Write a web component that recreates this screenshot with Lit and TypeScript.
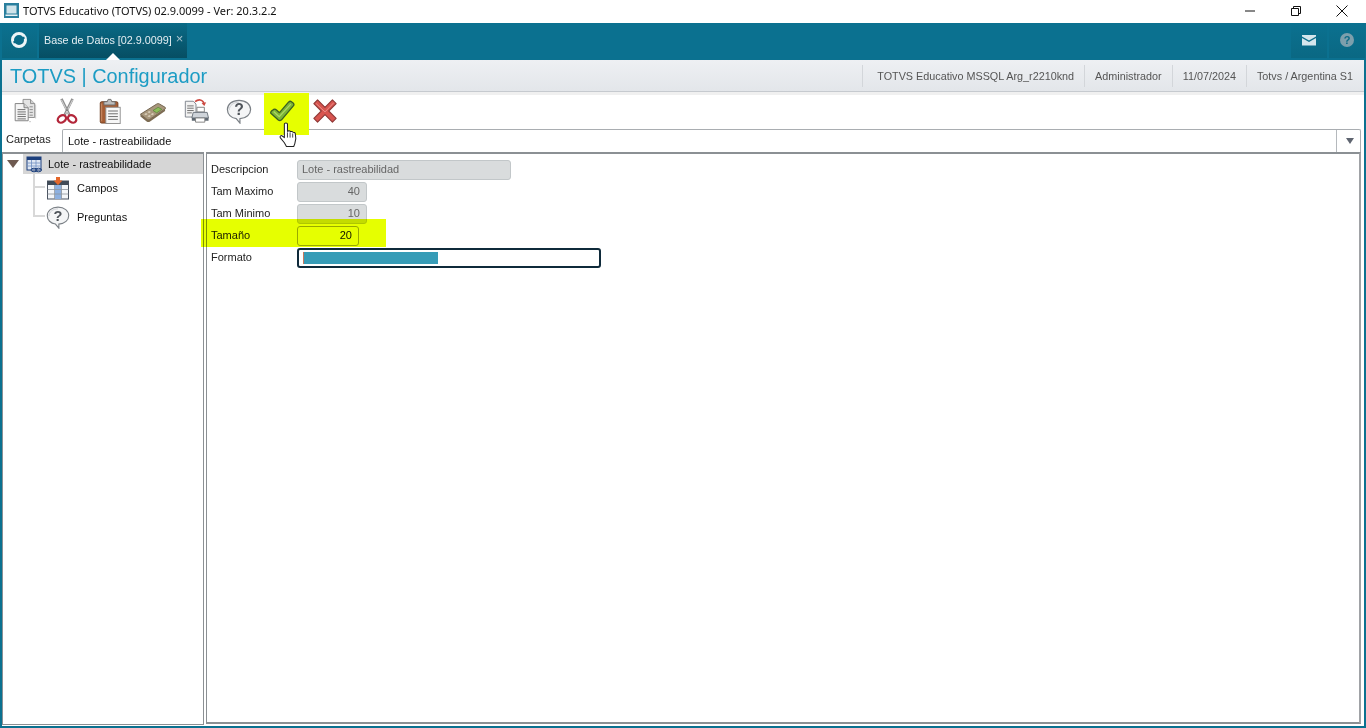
import { LitElement, html, css, svg } from "lit";
import { customElement } from "lit/decorators.js";

const copyIcon = svg`
  <path d="M13 1.500h8l4.500 4.500v15H13z" fill="#e4e4e4" stroke="#8d8d8d"/>
  <path d="M21 1.500V6h4.500" fill="#cfcfcf" stroke="#8d8d8d"/>
  <path d="M4.500 6H14l4.500 4.500v14h-14z" fill="#f5f5f5" stroke="#7d7d7d"/>
  <path d="M14 6v4.500h4.500" fill="#d6d6d6" stroke="#7d7d7d"/>
  <path d="M7 12.500h8.500M7 15h9M7 17.500h9M7 20h9M7 22.500h9" stroke="#666" stroke-width="1"/>
  <path d="M20 9.500h3.500M20 12.500h3.500M20 15.500h3.500M20 18.500h3.500" stroke="#888"/>
  <path d="M19.500 25.500h2M26.500 7v15" fill="none" stroke="#c4c4c4"/>`;

const scissorsIcon = svg`
  <path d="M8 1l8.500 17M20 1l-8.500 17" stroke="#8f8f8f" stroke-width="2.800" fill="none"/>
  <path d="M8 2l7.500 15M20 2l-7.500 15" stroke="#dcdcdc" stroke-width="1" fill="none"/>
  <circle cx="14" cy="13" r=".9" fill="#555"/>
  <ellipse cx="8.500" cy="22.500" rx="4.800" ry="3.600" transform="rotate(-35 8.500 22.500)" fill="none" stroke="#b3263a" stroke-width="2.500"/>
  <ellipse cx="19.500" cy="22.500" rx="4.800" ry="3.600" transform="rotate(35 19.500 22.500)" fill="none" stroke="#b3263a" stroke-width="2.500"/>`;

const clipboardIcon = svg`
  <rect x="3.500" y="4" width="19" height="23" rx="1.500" fill="#a65d34" stroke="#6f3f22"/>
  <path d="M5 6v19" stroke="#c88860" stroke-width="1.200"/>
  <rect x="9.500" y="10" width="15.500" height="17.500" fill="#f7f7f7" stroke="#8f8f8f"/>
  <path d="M12 14h10.500M12 17h10.500M12 20h10.500M12 23h10.500" stroke="#666"/>
  <path d="M7.500 7.500V4h3.500l1-2.500h3L16 4h3.500v3.500z" fill="#bdbdbd" stroke="#6c6c6c"/>`;

const calculatorIcon = svg`
  <path d="M.500 17.500L18 6.500c1-.6 2-.6 3 0l6 3.500c.8.600.8 1.200 0 1.800L10.500 23c-1 .6-2 .6-3 0z" fill="#a8977c" stroke="#6d5e49"/>
  <path d="M.500 17.500l7 5.500c1 .6 2 .6 3 0l16.500-11.200v2.200L10.500 25.500c-1 .6-2 .6-3 0L.500 20z" fill="#7c6b52"/>
  <path d="M14 13.500l5.500-3.500 4 2.200-5.500 3.800z" fill="#8cbf5a" stroke="#557f35" stroke-width=".7"/>
  <path d="M4.500 17.500l2-1.300 1.800 1.100-2 1.300zM8 19.700l2-1.300 1.800 1.100-2 1.300zM8 15.200l2-1.300 1.800 1.100-2 1.300zM11.500 17.500l2-1.300 1.800 1.100-2 1.300z" fill="#d8ceb9"/>`;

const printIcon = svg`
  <path d="M2.500 3.500h8.500l3 3v14H2.500z" fill="#f2f2f2" stroke="#7c828a"/>
  <path d="M4.500 8.500h7M4.500 11h7M4.500 13.500h7M4.500 16h5" stroke="#6a6a6a"/>
  <path d="M13 4c3.500-3 8-2.500 9.500 1.500" fill="none" stroke="#cc4a42" stroke-width="1.800"/>
  <path d="M25 4.500l-2 4-3-2.800z" fill="#cc4a42"/>
  <path d="M15 10h8v5h-8z" fill="#fff" stroke="#808080"/>
  <path d="M11 15.500h15l1.500 6h-18z" fill="#cfd4da" stroke="#69717a"/>
  <path d="M9.500 21.500h18v3h-18z" fill="#5f6872"/>
  <path d="M13.500 21.500h10v4.500h-10z" fill="#fff" stroke="#808080"/>`;

const helpBubble = svg`
  <path d="M14 2.500C6.500 2.500 1.500 7 1.500 12.500c0 5 4 9 9.500 9.700l4 4.800v-4.700c7-.4 11.500-4.800 11.500-9.800C26.500 7 21.500 2.500 14 2.500z" fill="#f4f5f6" stroke="#7b8086" stroke-width="1.300"/>
  <path d="M3.500 13c0-5 4.500-8.500 10.500-8.500" fill="none" stroke="#c9ccd0" stroke-width="1"/>
  <text x="14" y="18.500" text-anchor="middle" font-family="Liberation Sans, sans-serif" font-weight="700" font-size="17" fill="#4f545a">?</text>`;

const checkIcon = svg`
  <path d="M2 16.500c-.5-1 .2-2 1-2.700l2-1.500c1-.6 2-.5 2.800.3l3.500 3.200L21 4.500c1-1 2.200-1.300 3.200-.5l1.800 1.500c1 .8 1 2 .2 3L13.500 23.500c-1 1-2.500 1-3.500.2z" fill="#7db536" stroke="#3a5f22" stroke-width="1.400" stroke-linejoin="round"/>
  <path d="M5 14.500l6 5.500L23.500 6.500" fill="none" stroke="#aed766" stroke-width="1.300"/>`;

const crossIcon = svg`
  <path d="M2 6l4-4 8 8 8-8 4 4-8 8 8 8-4 4-8-8-8 8-4-4 8-8z" fill="#d8544f" stroke="#8f3a38" stroke-width="1.200" stroke-linejoin="round"/>
  <path d="M4.500 6L14 15 23.500 5" fill="none" stroke="#ec928c" stroke-width="1"/>`;

const toolIcons = [copyIcon, scissorsIcon, clipboardIcon, calculatorIcon, printIcon, helpBubble, checkIcon, crossIcon];

@customElement("app-root")
export class AppRoot extends LitElement {
  static styles = css`
    :host {
      display: flex;
      flex-direction: column;
      height: 728px;
      overflow: hidden;
      position: relative;
      background: #fff;
      font-family: "Liberation Sans", Arial, sans-serif;
      font-size: 11px;
      color: #222;
    }
    .titlebar {
      height: 23px;
      flex: none;
      box-sizing: border-box;
      display: flex;
      align-items: center;
      padding: 0 1px 2px 4px;
      background: #fff;
      font-family: "Noto Sans", sans-serif;
      font-size: 11px;
      color: #111;
    }
    .titlebar .app-icon { width: 15px; height: 15px; margin-right: 4px; }
    .titlebar .title { flex: 1; }
    .win-btn { width: 46px; display: flex; justify-content: center; }
    .win-btn svg { width: 12px; height: 12px; }

    .tabs {
      height: 37px;
      flex: none;
      box-sizing: border-box;
      display: flex;
      background: #0b7190;
      padding: 0 1px 0 2px;
    }
    .logo-cell {
      width: 35px;
      height: 35px;
      box-sizing: border-box;
      padding: 0 1px 2px 0;
      display: flex;
      align-items: center;
      justify-content: center;
      background: linear-gradient(#0b7190, #0a667f);
      margin-right: 2px;
    }
    .logo-cell svg { width: 18px; height: 18px; }
    .tab {
      width: 148px;
      height: 35px;
      box-sizing: border-box;
      padding: 11px 0 0 5px;
      position: relative;
      background: linear-gradient(#0a6a86, #064e63);
      color: #e4eef2;
      font-size: 10.800px;
      white-space: nowrap;
      display: flex;
      gap: 4px;
    }
    .tab .close { color: #a8c4ce; font-size: 13px; line-height: 10px; }
    .tab .notch {
      position: absolute;
      left: 67px;
      bottom: -2px;
      width: 0;
      height: 0;
      border: 7px solid transparent;
      border-top: 0;
      border-bottom: 7px solid #fff;
    }
    .spacer { flex: 1; }
    .side-btn {
      width: 36px;
      height: 35px;
      box-sizing: border-box;
      padding-bottom: 2px;
      margin-left: 2px;
      display: flex;
      align-items: center;
      justify-content: center;
      background: linear-gradient(#0b7190, #0a6883);
    }
    .side-btn svg { width: 16px; height: 16px; }

    .frame {
      flex: 1;
      display: flex;
      flex-direction: column;
      min-height: 0;
      border-left: 2px solid #0b7190;
      border-right: 2px solid #0b7190;
      border-bottom: 2px solid #0b7190;
      background: #fff;
    }
    .head {
      height: 32px;
      flex: none;
      box-sizing: border-box;
      display: flex;
      align-items: center;
      background: linear-gradient(#eef0f3, #e3e6ea);
      border-bottom: 1px solid #c6cacf;
      padding: 0 1px 0 8px;
    }
    .brand {
      flex: 1;
      padding-top: 1px;
      font-size: 19.900px;
      color: #1c9cc4;
    }
    .info {
      height: 22px;
      display: flex;
      align-items: center;
      padding: 0 10px;
      border-left: 1px solid #d3d6da;
      color: #555;
      font-size: 10.800px;
      white-space: nowrap;
    }
    .info.first { padding-left: 14px; }
    .strip { height: 3px; flex: none; background: #f0f0f0; }

    .toolbar {
      height: 34px;
      flex: none;
      box-sizing: border-box;
      padding-bottom: 2px;
      display: flex;
    }
    .tool {
      width: 43px;
      flex: none;
      display: flex;
      align-items: center;
      justify-content: center;
      position: relative;
    }
    .tool svg { width: 26px; height: 26px; position: relative; }
    .tool.hit::before {
      content: "";
      position: absolute;
      left: 4px;
      top: -2px;
      width: 45px;
      height: 42px;
      background: #e6ff00;
    }
    .hand {
      position: absolute;
      left: 279px;
      top: 122px;
      width: 18px;
      height: 26px;
    }

    .selector {
      height: 23px;
      flex: none;
      display: flex;
      align-items: center;
    }
    .selector label { width: 60px; padding-left: 4px; box-sizing: border-box; margin-top: -3px; }
    .combo {
      flex: 1;
      align-self: stretch;
      display: flex;
      align-items: center;
      box-sizing: border-box;
      border: 1px solid #a9adb1;
      border-bottom: 0;
      border-radius: 2px 2px 0 0;
      padding-left: 5px;
      margin-right: 3px;
    }
    .combo .value { flex: 1; color: #111; }
    .combo .arrow {
      width: 24px;
      align-self: stretch;
      box-sizing: border-box;
      padding-left: 3px;
      display: flex;
      align-items: center;
      justify-content: center;
      border-left: 1px solid #b5b9bd;
    }
    .combo .arrow i {
      width: 0;
      height: 0;
      border: 4px solid transparent;
      border-top: 6px solid #5f6570;
      border-bottom: 0;
    }

    .panes {
      flex: 1;
      min-height: 0;
      display: flex;
      gap: 2px;
      padding: 0 3px 1px 0;
    }
    .tree {
      width: 202px;
      flex: none;
      box-sizing: border-box;
      border: 1px solid #8b9094;
      border-top-width: 2px;
    }
    .tree-root {
      height: 20px;
      display: flex;
      align-items: center;
    }
    .caret {
      width: 0;
      height: 0;
      margin: 0 4px 0 4px;
      border: 6px solid transparent;
      border-top: 8px solid #6e5a50;
      border-bottom: 0;
    }
    .root-sel {
      flex: 1;
      align-self: stretch;
      display: flex;
      align-items: center;
      gap: 5px;
      padding-left: 3px;
      background: #d6d6d6;
      color: #111;
    }
    .root-sel svg { width: 17px; height: 17px; }
    .child {
      display: flex;
      align-items: center;
      height: 29px;
      margin-left: 30px;
      color: #111;
    }
    .child:nth-child(2) { margin-top: -1px; }
    .child svg { width: 24px; height: 24px; margin-right: 7px; }
    .wire {
      width: 12px;
      height: 29px;
      box-sizing: border-box;
      border-left: 2px solid #d8d8d8;
      margin-right: 1px;
      position: relative;
    }
    .wire::after {
      content: "";
      position: absolute;
      left: 0;
      right: 0;
      top: 13px;
      border-top: 2px solid #d8d8d8;
    }
    .wire.last { height: 15px; align-self: flex-start; }

    .form {
      flex: 1;
      box-sizing: border-box;
      border: 1px solid #8b9094;
      border-top-width: 2px;
      border-bottom-width: 2px;
      border-right: 2px solid #a0a2a6;
      margin-bottom: 1px;
      padding: 6px 0 0 4px;
      display: flex;
      flex-direction: column;
      gap: 2px;
      position: relative;
    }
    .row {
      height: 20px;
      display: flex;
      align-items: center;
      color: #222;
    }
    .row .lbl { width: 86px; flex: none; padding-bottom: 2px; }
    .field {
      height: 20px;
      box-sizing: border-box;
      border: 1px solid #c2c7c9;
      border-radius: 3px;
      background: #d9dcdd;
      color: #666;
      padding: 0 4px 2px;
      display: flex;
      align-items: center;
    }
    .field.num { justify-content: flex-end; padding-right: 6px; }
    .w-desc { width: 214px; }
    .w-tam { width: 70px; }
    .w-cur { width: 62px; background: #fff; color: #111; border-color: #aaa; }
    .w-fmt {
      width: 304px;
      background: #fff;
      border: 2px solid #0f2a3a;
      padding: 2px 4px;
      align-items: stretch;
    }
    .w-fmt span { width: 135px; background: #379cb7; border-left: 1px solid #c8785e; box-sizing: border-box; }
    .mark {
      position: absolute;
      left: -6px;
      top: 65px;
      width: 185px;
      height: 28px;
      background: #e6ff00;
      mix-blend-mode: multiply;
    }
  `;

  render() {
    return html`
      <div class="titlebar">
        <svg class="app-icon" viewBox="0 0 15 15">
          <rect width="15" height="15" fill="#2a7f9e"/>
          <rect x="2.500" y="2.500" width="10" height="8" fill="#cfe3ea"/>
          <rect x="1.500" y="11.500" width="12" height="1.500" fill="#e8f1f4"/>
        </svg>
        <span class="title">TOTVS Educativo (TOTVS) 02.9.0099 - Ver: 20.3.2.2</span>
        <span class="win-btn"><svg viewBox="0 0 12 12"><path d="M1 6h10" stroke="#111" fill="none"/></svg></span>
        <span class="win-btn"><svg viewBox="0 0 12 12"><path d="M1.500 3.500h7v7h-7zM3.500 3.500v-2h7v7h-2" stroke="#111" fill="none"/></svg></span>
        <span class="win-btn"><svg viewBox="0 0 12 12"><path d="M.500 .500l11 11M11.500 .500l-11 11" stroke="#111" fill="none"/></svg></span>
      </div>

      <div class="tabs">
        <div class="logo-cell">
          <svg viewBox="0 0 18 18">
            <circle cx="9" cy="9" r="6.500" fill="none" stroke="#eef5f7" stroke-width="3"/>
            <path d="M3.500 11.500L14.500 6.500" stroke="#0b6a86" stroke-width="2"/>
          </svg>
        </div>
        <div class="tab">
          Base de Datos [02.9.0099]<span class="close">×</span>
          <span class="notch"></span>
        </div>
        <div class="spacer"></div>
        <div class="side-btn">
          <svg viewBox="0 0 16 16">
            <path d="M1 3h14v1.500L8 8.500 1 4.500z" fill="#d5e6ec"/>
            <path d="M1 6l7 4 7-4v7.500H1z" fill="#d5e6ec"/>
          </svg>
        </div>
        <div class="side-btn">
          <svg viewBox="0 0 16 16">
            <circle cx="8" cy="8" r="7" fill="#7d9fac"/>
            <text x="8" y="12" text-anchor="middle" font-family="Liberation Sans, sans-serif" font-weight="700" font-size="11" fill="#0b6a86">?</text>
          </svg>
        </div>
      </div>

      <div class="frame">
        <div class="head">
          <div class="brand">TOTVS | Configurador</div>
          <div class="info first">TOTVS Educativo MSSQL Arg_r2210knd</div>
          <div class="info">Administrador</div>
          <div class="info">11/07/2024</div>
          <div class="info">Totvs / Argentina S1</div>
        </div>
        <div class="strip"></div>

        <div class="toolbar">
          ${toolIcons.map(
            (icon, i) => html`<div class="tool ${i === 6 ? "hit" : ""}"><svg viewBox="0 0 28 28">${icon}</svg></div>`
          )}
        </div>

        <div class="selector">
          <label>Carpetas</label>
          <div class="combo">
            <span class="value">Lote - rastreabilidade</span>
            <span class="arrow"><i></i></span>
          </div>
        </div>

        <div class="panes">
          <div class="tree">
            <div class="tree-root">
              <span class="caret"></span>
              <div class="root-sel">
                <svg viewBox="0 0 17 17">
                  <rect x="1" y="1" width="14" height="13" fill="#dfe7f3" stroke="#1c3f7c"/>
                  <rect x="1" y="1" width="14" height="3" fill="#1c3f7c"/>
                  <path d="M1 7h14M1 10h14M5.500 4v10M10 4v10" stroke="#6f8fc0" stroke-width=".8"/>
                  <ellipse cx="8" cy="14" rx="3" ry="1.800" fill="none" stroke="#1c3f7c"/>
                  <ellipse cx="12.500" cy="14" rx="3" ry="1.800" fill="none" stroke="#1c3f7c"/>
                </svg>
                Lote - rastreabilidade
              </div>
            </div>
            <div class="child">
              <span class="wire"></span>
              <svg viewBox="0 0 24 24">
                <rect x="1.500" y="5" width="21" height="18" fill="#f4f6f9" stroke="#4a5360"/>
                <rect x="1.500" y="5" width="21" height="4" fill="#414b58"/>
                <rect x="9" y="9" width="6.500" height="14" fill="#8db0e0"/>
                <path d="M1.500 13.500h21M1.500 18h21M8.500 9v14M15.500 9v14" stroke="#8d949d" stroke-width=".8"/>
                <path d="M10 1h4v3.500h2.500L12 9 7.500 4.500H10z" fill="#e4672b"/>
              </svg>
              Campos
            </div>
            <div class="child">
              <span class="wire last"></span>
              <svg viewBox="0 0 28 28">${helpBubble}</svg>
              Preguntas
            </div>
          </div>

          <div class="form">
            <div class="row"><span class="lbl">Descripcion</span><span class="field w-desc">Lote - rastreabilidad</span></div>
            <div class="row"><span class="lbl">Tam Maximo</span><span class="field num w-tam">40</span></div>
            <div class="row"><span class="lbl">Tam Minimo</span><span class="field num w-tam">10</span></div>
            <div class="row"><span class="lbl">Tamaño</span><span class="field num w-cur">20</span></div>
            <div class="row"><span class="lbl">Formato</span><span class="field w-fmt"><span></span></span></div>
            <div class="mark"></div>
          </div>
        </div>
      </div>

      <svg class="hand" viewBox="0 0 17 25">
        <path d="M5 2c0-1.500 3-1.500 3 0v7l1-.5 1.500.2.500.5 1.500 0 .8.600 1.400.2L15.500 11l.5 5-1 5-1 2.500H7L5 20l-4-5c-.6-1.500 1-2.500 2-1.500L5 15z" fill="#fff" stroke="#222" stroke-linejoin="round"/>
        <path d="M8 10v5M10.500 10v5M13 11v4" stroke="#222" stroke-width=".8"/>
      </svg>
    `;
  }
}
